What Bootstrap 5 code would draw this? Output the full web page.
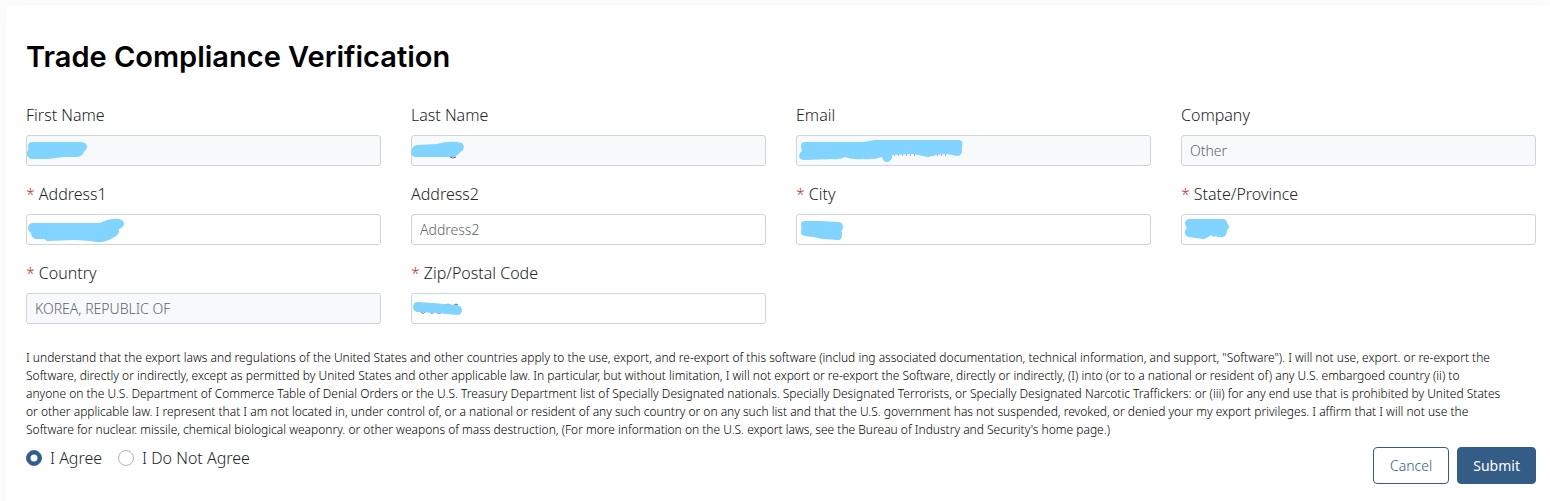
<!DOCTYPE html>
<html lang="en">
<head>
<meta charset="utf-8">
<meta name="viewport" content="width=device-width, initial-scale=1">
<title>Trade Compliance Verification</title>
<link href="https://cdn.jsdelivr.net/npm/bootstrap@5.3.0/dist/css/bootstrap.min.css" rel="stylesheet">
<style>
  body { background: #fcfcfc; color: #212529; font-family: "Noto Sans", "Noto Sans CJK KR", sans-serif; font-weight: 300; }
  .panel { background: #fff; border-radius: 8px 0 0 0; box-shadow: 0 0 12px rgba(0, 0, 0, .02); margin: 5px 0 0 6px; padding: 34px 14px 17px 20px; min-height: calc(100vh - 5px); }
  .page-title { font-family: Inter, sans-serif; font-size: 29px; font-weight: 600; line-height: 36px; color: #000; margin-bottom: 28px; }
  .fields { --bs-gutter-x: 30px; --bs-gutter-y: 16px; }
  .form-label { line-height: 24px; display: block; }
  .req { color: #c23934; margin-right: 4px; }
  .form-control-sm { height: 31px; font-size: 14px; font-weight: 300; border-color: #ced4da; border-radius: 3px; }
  .form-control-sm::placeholder { color: #5c656d; }
  .form-control-sm:disabled { background: #f8f9fb; color: #5c656d; }
  .scribble { position: absolute; left: 0; top: 0; pointer-events: none; fill: #80d4ff; }
  .scribble .trace { fill: none; stroke: #666b70; stroke-width: 1; }
  .terms { font-size: 12px; line-height: 18px; color: #000; margin: 25px 0 7px; }
  .form-check { min-height: 24px; padding-left: 24px; margin: 0; }
  .form-check .form-check-input { margin-left: -24px; border-color: #adb5bd; }
  .form-check .form-check-input:checked { background-color: #335c87; border-color: #3d62c4; }
  .actions .btn { --bs-btn-font-size: 14px; --bs-btn-font-weight: 300; --bs-btn-line-height: 23px; --bs-btn-padding-x: 16px; --bs-btn-border-radius: 4px; margin-top: 1px; }
  .btn-cancel { --bs-btn-color: #335c87; --bs-btn-border-color: #335c87; --bs-btn-bg: #fff; --bs-btn-hover-bg: #eef3f8; }
  .btn-submit { --bs-btn-color: #fff; --bs-btn-border-color: #335c87; --bs-btn-bg: #335c87; --bs-btn-hover-color: #fff; --bs-btn-hover-bg: #284a6d; }
  .actions .btn-submit { --bs-btn-font-weight: 400; --bs-btn-padding-x: 15px; }
</style>
</head>
<body>
<main class="panel">
  <h1 class="page-title">Trade Compliance Verification</h1>
  <form>
    <div class="row row-cols-1 row-cols-sm-2 row-cols-lg-4 fields">
      <div class="col">
        <label class="form-label" for="first">First Name</label>
        <div class="position-relative">
          <input class="form-control form-control-sm" id="first" type="text" disabled>
          <svg class="scribble" width="64" height="31" aria-hidden="true"><path d="M5 7H55Q62 8 61 13L58 17Q56 22 50 22L38 22L22 24H5Q0 22 1 17Q3 15 2 11Q2 8 5 7Z"/></svg>
        </div>
      </div>
      <div class="col">
        <label class="form-label" for="last">Last Name</label>
        <div class="position-relative">
          <input class="form-control form-control-sm" id="last" type="text" disabled>
          <svg class="scribble" width="56" height="31" aria-hidden="true"><path d="M0 17Q1 11 6 10L26 9Q39 5 51 8Q54 11 52 15L44 22L4 22Q0 21 0 17Z"/><path class="trace" d="M39 22q3 2 6 0"/></svg>
        </div>
      </div>
      <div class="col">
        <label class="form-label" for="email">Email</label>
        <div class="position-relative">
          <input class="form-control form-control-sm" id="email" type="email" disabled>
          <svg class="scribble" width="170" height="31" aria-hidden="true"><path class="trace" d="M98 20H121M137 20H153" stroke-dasharray="1 3"/><path d="M5 12Q5 7 9 7H67L79 5H163Q168 6 166 11V17Q165 21 161 21L151 19Q141 19 132 22L117 19L96 20V23Q94 27 91 27Q87 27 86 22Q77 25 67 24Q57 25 49 22Q43 25 37 24L9 25Q3 25 3 21Q3 18 6 16Z"/></svg>
        </div>
      </div>
      <div class="col">
        <label class="form-label" for="company">Company</label>
        <input class="form-control form-control-sm" id="company" type="text" value="Other" disabled>
      </div>
      <div class="col">
        <label class="form-label" for="address1"><span class="req">*</span>Address1</label>
        <div class="position-relative">
          <input class="form-control form-control-sm" id="address1" type="text">
          <svg class="scribble" width="100" height="31" aria-hidden="true"><path d="M2 14Q2 10 6 9H74Q84 4 93 5Q98 6 98 10Q97 14 93 15Q94 19 90 22Q80 29 71 28L64 27L50 26L21 27L18 25H10Q5 24 5 19Q2 17 2 14Z"/></svg>
        </div>
      </div>
      <div class="col">
        <label class="form-label" for="address2">Address2</label>
        <input class="form-control form-control-sm" id="address2" type="text" placeholder="Address2">
      </div>
      <div class="col">
        <label class="form-label" for="city"><span class="req">*</span>City</label>
        <div class="position-relative">
          <input class="form-control form-control-sm" id="city" type="text">
          <svg class="scribble" width="50" height="31" aria-hidden="true"><path d="M5 10Q5 7 9 7H24L43 8Q47 9 47 13Q47 16 45 17Q47 19 46 21Q46 26 42 26L27 25L17 23L9 22Q4 21 5 17Q6 14 5 10Z"/></svg>
        </div>
      </div>
      <div class="col">
        <label class="form-label" for="state"><span class="req">*</span>State/Province</label>
        <div class="position-relative">
          <input class="form-control form-control-sm" id="state" type="text">
          <svg class="scribble" width="50" height="31" aria-hidden="true"><path d="M4 9Q4 6 8 5H43Q46 6 46 9Q50 13 46 16Q46 23 41 23Q37 24 35 22Q32 24 30 21Q25 25 22 25L8 23Q3 22 4 17Q4 15 6 14Q4 12 4 9Z"/></svg>
        </div>
      </div>
      <div class="col">
        <label class="form-label" for="country"><span class="req">*</span>Country</label>
        <input class="form-control form-control-sm" id="country" type="text" value="KOREA, REPUBLIC OF" disabled>
      </div>
      <div class="col">
        <label class="form-label" for="zip"><span class="req">*</span>Zip/Postal Code</label>
        <div class="position-relative">
          <input class="form-control form-control-sm" id="zip" type="text">
          <svg class="scribble" width="54" height="31" aria-hidden="true"><path class="trace" d="M10 19q2 3 4 0M19 19q2 3 4 0M26 20H30M35 12q2-2 4 0M43 12q2-2 4 0"/><path d="M2 14Q2 9 7 9L22 10L46 12Q51 13 51 17Q51 22 46 22L26 20L6 19Q2 18 2 14Z"/></svg>
        </div>
      </div>
    </div>

    <p class="terms">I understand that the export laws and regulations of the United States and other countries apply to the use, export, and re-export of this software (includ ing associated documentation, technical information, and support, "Software"). I will not use, export. or re-export the <br class="d-none d-xl-inline">Software, directly or indirectly, except as permitted by United States and other applicable law. In particular, but without limitation, I will not export or re-export the Software, directly or indirectly, (I) into (or to a national or resident of) any U.S. embargoed country (ii) to <br class="d-none d-xl-inline">anyone on the U.S. Department of Commerce Table of Denial Orders or the U.S. Treasury Department list of Specially Designated nationals. Specially Designated Terrorists, or Specially Designated Narcotic Traffickers: or (iii) for any end use that is prohibited by United States <br class="d-none d-xl-inline">or other applicable law. I represent that I am not located in, under control of, or a national or resident of any such country or on any such list and that the U.S. government has not suspended, revoked, or denied your my export privileges. I affirm that I will not use the <br class="d-none d-xl-inline">Software for nuclear. missile, chemical biological weaponry. or other weapons of mass destruction, (For more information on the U.S. export laws, see the Bureau of Industry and Security's home page.)</p>

    <div class="d-flex flex-wrap justify-content-between align-items-start">
      <div class="d-flex flex-wrap gap-3">
        <div class="form-check">
          <input class="form-check-input" type="radio" name="consent" id="agree" checked>
          <label class="form-check-label" for="agree">I Agree</label>
        </div>
        <div class="form-check">
          <input class="form-check-input" type="radio" name="consent" id="disagree">
          <label class="form-check-label" for="disagree">I Do Not Agree</label>
        </div>
      </div>
      <div class="d-flex gap-2 actions">
        <button type="button" class="btn btn-cancel">Cancel</button>
        <button type="submit" class="btn btn-submit">Submit</button>
      </div>
    </div>
  </form>
</main>
<script src="https://cdn.jsdelivr.net/npm/bootstrap@5.3.0/dist/js/bootstrap.bundle.min.js"></script>
</body>
</html>
